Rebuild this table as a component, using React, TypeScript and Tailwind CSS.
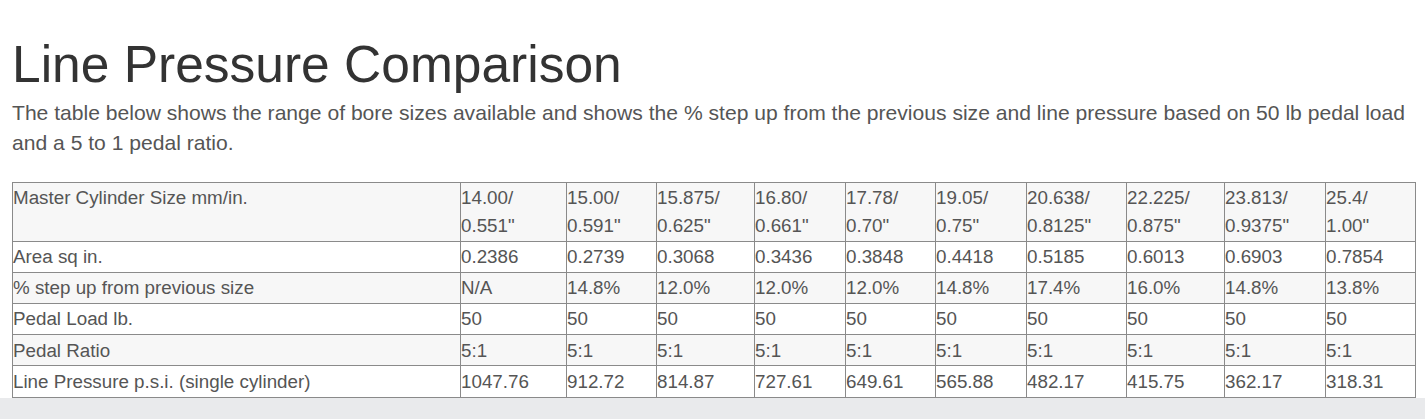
const HEADERS = [
  ["14.00/", '0.551"'],
  ["15.00/", '0.591"'],
  ["15.875/", '0.625"'],
  ["16.80/", '0.661"'],
  ["17.78/", '0.70"'],
  ["19.05/", '0.75"'],
  ["20.638/", '0.8125"'],
  ["22.225/", '0.875"'],
  ["23.813/", '0.9375"'],
  ["25.4/", '1.00"'],
];

const ROWS = [
  {
    label: "Area sq in.",
    values: ["0.2386", "0.2739", "0.3068", "0.3436", "0.3848", "0.4418", "0.5185", "0.6013", "0.6903", "0.7854"],
  },
  {
    label: "% step up from previous size",
    values: ["N/A", "14.8%", "12.0%", "12.0%", "12.0%", "14.8%", "17.4%", "16.0%", "14.8%", "13.8%"],
  },
  {
    label: "Pedal Load lb.",
    values: ["50", "50", "50", "50", "50", "50", "50", "50", "50", "50"],
  },
  {
    label: "Pedal Ratio",
    values: ["5:1", "5:1", "5:1", "5:1", "5:1", "5:1", "5:1", "5:1", "5:1", "5:1"],
  },
  {
    label: "Line Pressure p.s.i. (single cylinder)",
    values: ["1047.76", "912.72", "814.87", "727.61", "649.61", "565.88", "482.17", "415.75", "362.17", "318.31"],
  },
];

const COL_WIDTHS = [448, 106, 90, 98, 91, 90, 91, 100, 98, 101, 90];

const cell = "border border-[#8a8a8a] px-0 py-[1.35px] align-top text-left font-normal";

export default function App() {
  return (
    <main className="min-h-[419px] bg-white font-['Liberation_Sans',Arial,sans-serif] text-[#555]">
      <section className="px-3 pt-[36px]">
        <h1 className="text-[51.5px] leading-[56px] font-light text-[#333]">Line Pressure Comparison</h1>
        <p className="mt-[6px] text-[21.1px] leading-[30px] text-[#555]">
          The table below shows the range of bore sizes available and shows the % step up from the previous size
          and line pressure based on 50 lb pedal load and a 5 to 1 pedal ratio.
        </p>

        <table className="mt-[24px] w-[1404px] table-fixed border-collapse text-[18.8px] leading-[27.5px]">
          <colgroup>
            {COL_WIDTHS.map((w, i) => (
              <col key={i} style={{ width: w }} />
            ))}
          </colgroup>
          <tbody>
            <tr className="bg-[#f7f7f7]">
              <td className={cell}>Master Cylinder Size mm/in.</td>
              {HEADERS.map(([a, b]) => (
                <td key={a} className={cell}>
                  {a}
                  <br />
                  {b}
                </td>
              ))}
            </tr>
            {ROWS.map((r, i) => (
              <tr key={r.label} className={i % 2 === 1 ? "bg-[#f7f7f7]" : "bg-white"}>
                <td className={cell}>{r.label}</td>
                {r.values.map((v, j) => (
                  <td key={j} className={cell}>
                    {v}
                  </td>
                ))}
              </tr>
            ))}
          </tbody>
        </table>
      </section>

      {/* footer band */}
      <div className="h-[24px] bg-[#e9eaec]" />
    </main>
  );
}
